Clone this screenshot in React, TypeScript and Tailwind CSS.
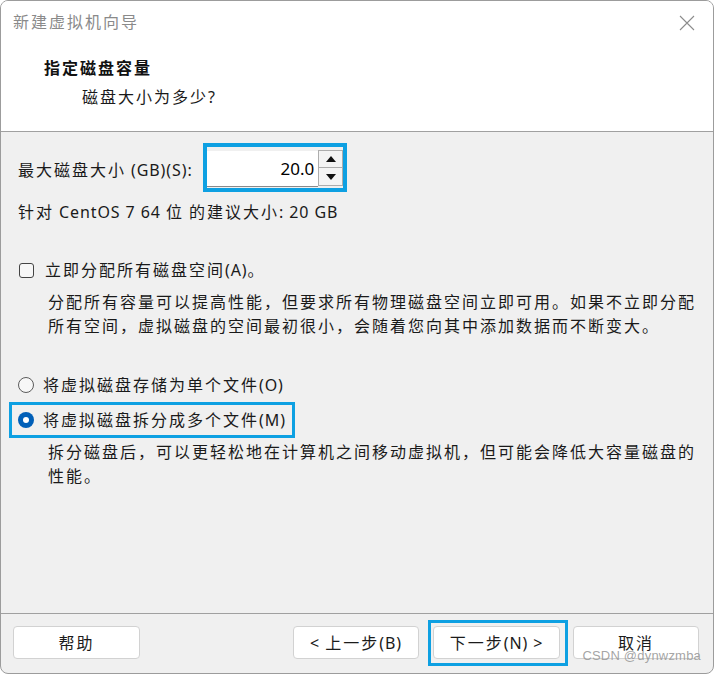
import React from "react";

const FONT = { fontFamily: '"Noto Sans", "Noto Sans CJK SC", sans-serif' };

// wraps latin runs so only the chinese glyphs get the wide spacing
const Txt = ({ children }: { children: string }) => {
  const parts = children.split(/([\x20-\x7e]+)/).filter(Boolean);
  return (
    <span className="whitespace-pre">
      {parts.map((p, i) =>
        /^[\x20-\x7e]+$/.test(p) ? (
          <span key={i} className="tracking-[0.9px]">
            {p}
          </span>
        ) : (
          <span key={i} className="tracking-[2px]">
            {p}
          </span>
        )
      )}
    </span>
  );
};

const Radio = ({ checked }: { checked?: boolean }) =>
  checked ? (
    <span className="w-4 h-4 rounded-full bg-[#005fb8] flex items-center justify-center shrink-0">
      <span className="w-[6px] h-[6px] rounded-full bg-white" />
    </span>
  ) : (
    <span className="w-4 h-4 rounded-full border border-[#5c5c5c] bg-[#f7f7f7] shrink-0" />
  );

const Btn = ({ label, w }: { label: string; w: string }) => (
  <div
    className={`${w} h-[33px] rounded-[4px] border border-[#d2d2d2] bg-white flex items-center justify-center text-[16px] text-[#1b1b1b]`}
  >
    <Txt>{label}</Txt>
  </div>
);

export default function App() {
  return (
    <div className="w-[714px] h-[674px] bg-white" style={FONT}>
      <div className="relative w-full h-full rounded-[8px] border border-[#9c9c9c] overflow-hidden bg-[#f0f0f0] flex flex-col text-[16px] leading-6 text-[#1a1a1a] whitespace-nowrap">
        {/* header */}
        <div className="h-[131px] bg-white border-b border-[#a0a0a0] shrink-0">
          <div className="h-[42px] flex items-center justify-between pl-[12px] pr-[18px]">
            <span className="text-[#8a8a8a]">
              <Txt>新建虚拟机向导</Txt>
            </span>
            <svg width="16" height="16" viewBox="0 0 16 16" className="mt-[1px]">
              <path d="M1 1L15 15M15 1L1 15" stroke="#8c8c8c" strokeWidth="1.1" fill="none" />
            </svg>
          </div>
          <div className="pl-[43px] mt-[13px] font-bold text-[#111]">
            <Txt>指定磁盘容量</Txt>
          </div>
          <div className="pl-[81px] mt-[5px]">
            <Txt>磁盘大小为多少?</Txt>
          </div>
        </div>

        {/* body */}
        <div className="flex-1 px-[17px] pt-[11px]">
          <div className="flex items-center">
            <span className="w-[185px] mt-[4px]">
              <Txt>最大磁盘大小 (GB)(S):</Txt>
            </span>
            <div className="w-[144px] h-[49px] border-4 border-[#0ea0e2] flex items-start pt-[4px]">
              <div className="w-[112px] h-[36px] bg-white border-b border-[#8a8a8a] flex items-center justify-end pr-[4px] text-[17px] text-black">
                20.0
              </div>
              <div className="w-[25px] h-[36px] flex flex-col -mt-[1px]">
                <div className="h-[18px] border border-[#adadad] bg-[#f4f4f4] flex items-center justify-center">
                  <svg width="10" height="6" viewBox="0 0 10 6">
                    <path d="M5 0L10 6H0Z" fill="#111" />
                  </svg>
                </div>
                <div className="h-[18px] border border-t-0 border-[#adadad] bg-[#f4f4f4] flex items-center justify-center">
                  <svg width="10" height="6" viewBox="0 0 10 6">
                    <path d="M0 0H10L5 6Z" fill="#111" />
                  </svg>
                </div>
              </div>
            </div>
          </div>

          <div className="mt-[8px]">
            <Txt>针对 CentOS 7 64 位 的建议大小: 20 GB</Txt>
          </div>

          <div className="mt-[34px] flex items-center">
            <span className="w-[15px] h-[15px] ml-[1px] rounded-[3px] border border-[#444] bg-[#f7f7f7] shrink-0" />
            <span className="ml-[11px]">
              <Txt>立即分配所有磁盘空间(A)。</Txt>
            </span>
          </div>
          <div className="mt-[8px] pl-[30px]">
            <div>
              <Txt>分配所有容量可以提高性能，但要求所有物理磁盘空间立即可用。如果不立即分配</Txt>
            </div>
            <div>
              <Txt>所有空间，虚拟磁盘的空间最初很小，会随着您向其中添加数据而不断变大。</Txt>
            </div>
          </div>

          <div className="mt-[35px] flex items-center h-6">
            <Radio />
            <span className="ml-[9px]">
              <Txt>将虚拟磁盘存储为单个文件(O)</Txt>
            </span>
          </div>
          <div className="mt-[5px] -ml-[9px] inline-flex items-center h-[36px] border-[3px] border-[#0ea0e2] pl-[6px] pr-[6px]">
            <Radio checked />
            <span className="ml-[9px]">
              <Txt>将虚拟磁盘拆分成多个文件(M)</Txt>
            </span>
          </div>
          <div className="mt-[2px] pl-[30px]">
            <div>
              <Txt>拆分磁盘后，可以更轻松地在计算机之间移动虚拟机，但可能会降低大容量磁盘的</Txt>
            </div>
            <div>
              <Txt>性能。</Txt>
            </div>
          </div>
        </div>

        {/* footer */}
        <div className="h-[60px] shrink-0 border-t border-[#a0a0a0] flex items-start pt-[6px] pl-[12px] pr-[14px]">
          <div className="mt-[6px]">
            <Btn label="帮助" w="w-[127px]" />
          </div>
          <div className="flex-1" />
          <div className="mt-[6px]">
            <Btn label="< 上一步(B)" w="w-[126px]" />
          </div>
          <div className="ml-[9px] w-[140px] h-[46px] border-[3px] border-[#0ea0e2] pl-[2px] pt-[3px]">
            <Btn label="下一步(N) >" w="w-[127px]" />
          </div>
          <div className="ml-[5px] mt-[6px]">
            <Btn label="取消" w="w-[126px]" />
          </div>
        </div>

        <span
          className="absolute right-[12px] bottom-[5px] text-[13px] text-[#9a9a9a]/90 tracking-[0.2px]"
          style={{ fontFamily: '"Liberation Sans", Arial, sans-serif' }}
        >
          CSDN @dynwzmba
        </span>
      </div>
    </div>
  );
}
